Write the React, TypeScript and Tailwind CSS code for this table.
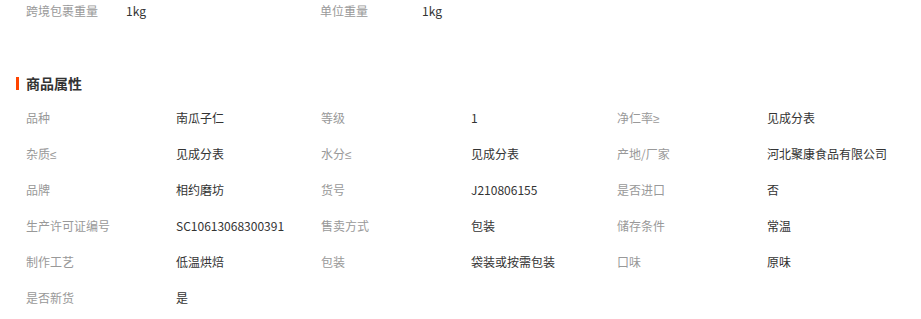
const attrs: [string, string][] = [
  ["品种", "南瓜子仁"],
  ["等级", "1"],
  ["净仁率≥", "见成分表"],
  ["杂质≤", "见成分表"],
  ["水分≤", "见成分表"],
  ["产地/厂家", "河北聚康食品有限公司"],
  ["品牌", "相约磨坊"],
  ["货号", "J210806155"],
  ["是否进口", "否"],
  ["生产许可证编号", "SC10613068300391"],
  ["售卖方式", "包装"],
  ["储存条件", "常温"],
  ["制作工艺", "低温烘焙"],
  ["包装", "袋装或按需包装"],
  ["口味", "原味"],
  ["是否新货", "是"],
];

function Label({ text }: { text: string }) {
  const last = text.slice(-1);
  if (last === "≥" || last === "≤") {
    return (
      <span className="w-[150px] text-[#999]">
        {text.slice(0, -1)}
        <span style={{ fontFamily: '"Liberation Sans", sans-serif' }}>{last}</span>
      </span>
    );
  }
  return <span className="w-[150px] text-[#999]">{text}</span>;
}

export default function App() {
  return (
    <div
      className="w-[921px] h-[319px] bg-white overflow-hidden text-[12px]"
      style={{ fontFamily: '"Noto Sans CJK SC", "Liberation Sans", sans-serif' }}
    >
      {/* weight row */}
      <div className="flex pl-[26px] h-[22px] items-center">
        <div className="flex w-[294px]">
          <span className="w-[100px] text-[#999]">跨境包裹重量</span>
          <span className="text-[#333]">1kg</span>
        </div>
        <div className="flex">
          <span className="w-[102px] text-[#999]">单位重量</span>
          <span className="text-[#333]">1kg</span>
        </div>
      </div>

      {/* heading */}
      <div className="flex items-center mt-[51px] h-[20px] pl-[16px]">
        <span className="w-[3px] h-[13px] bg-[#ff4400] mr-[7px] mt-[1px]" />
        <span className="text-[14px] font-bold text-[#333]">商品属性</span>
      </div>

      {/* attribute grid */}
      <div className="grid grid-cols-[295px_296px_295px] pl-[26px] mt-[7px]">
        {attrs.map(([k, v]) => (
          <div key={k} className="flex h-[36px] items-center">
            <Label text={k} />
            <span className="text-[#333]">{v}</span>
          </div>
        ))}
      </div>
    </div>
  );
}
